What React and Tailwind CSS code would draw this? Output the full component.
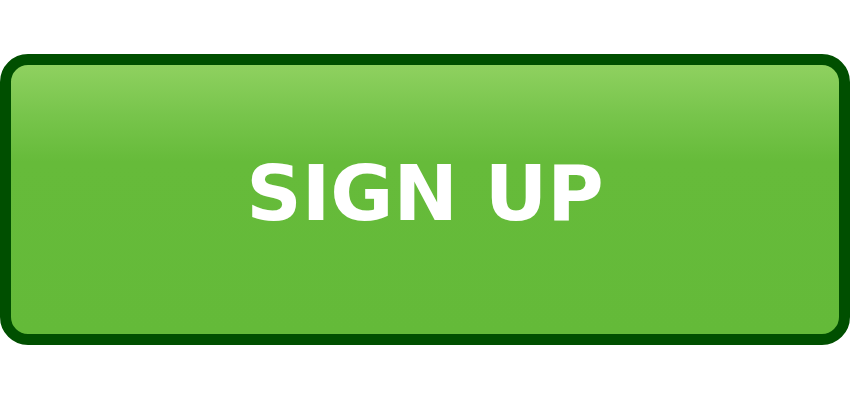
export default function App() {
  return (
    <div className="w-[850px] h-[400px] bg-white pt-[54px]">
      <button
        type="button"
        className="w-[850px] h-[291px] border-[11px] border-[#004f00] rounded-[28px] bg-[linear-gradient(180deg,#8fd160_0%,#78c54c_18%,#66bb3a_36%,#64ba39_100%)] flex items-center justify-center pb-[13px]"
      >
        <span className="text-white text-[77px] leading-none font-bold font-['DejaVu_Sans',sans-serif]">
          SIGN UP
        </span>
      </button>
    </div>
  );
}
